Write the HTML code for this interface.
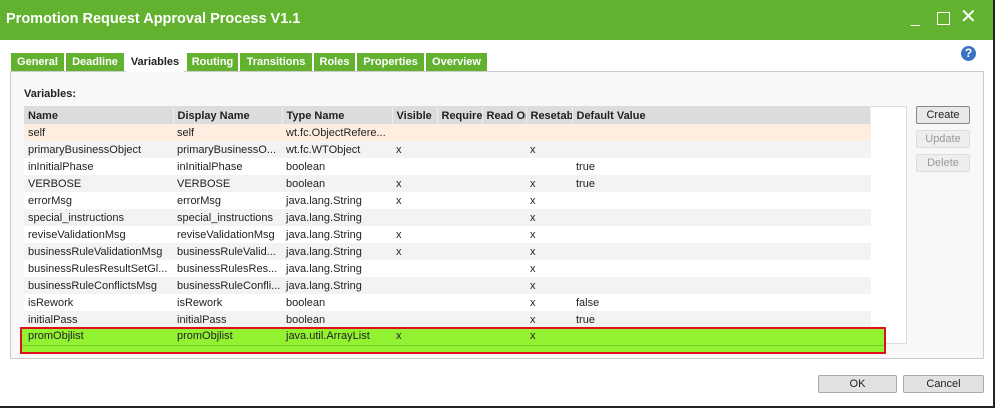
<!DOCTYPE html><html><head><style>
body{margin:0;width:998px;height:410px;background:#fff;font-family:"Liberation Sans",Arial,sans-serif;font-size:11px;color:#222;position:relative;overflow:hidden}
.a{position:absolute}
.title{left:0;top:0;width:993px;height:40px;background:#62b22f;color:#fff;font-weight:bold;font-size:14.5px;line-height:38px}
.tab{position:absolute;top:53px;height:18px;background:#62b22f;color:#fff;font-weight:bold;font-size:11px;line-height:18px;text-align:center}
.tab.sel{background:#fff;color:#222;height:19px}
.panel{left:10px;top:71px;width:972px;height:286px;border:1px solid #ccc;background:#f8f8f8}
table{border-collapse:collapse;position:absolute;left:24px;top:107px;width:847px;table-layout:fixed}
td,th{height:17px;padding:0 0 0 4px;white-space:nowrap;overflow:hidden;text-align:left;font-size:11px}
th{background:#dcdcdc;border-right:1px solid #eee;font-weight:bold}
tr:nth-child(odd) td{background:#f3f3f3}tr:nth-child(even) td{background:#fff}
.btn{position:absolute;border:1px solid #aaa;border-radius:2px;background:#e8e8e8;text-align:center;font-size:11px;line-height:16px}
</style></head><body>
<div class="a title"><span style="margin-left:6px">Promotion Request Approval Process V1.1</span>
<span class="a" style="left:911px;top:0;font-weight:normal;font-size:16px">_</span>
<span class="a" style="left:937px;top:12px;width:11px;height:11px;border:1.5px solid #fff"></span>
<span class="a" style="left:960px;top:-2px;font-weight:normal;font-size:20px">✕</span></div>
<div class="a" style="left:993px;top:0;width:2px;height:408px;background:#222"></div>
<div class="a" style="left:0;top:406px;width:995px;height:2px;background:#222"></div>
<div class="a" style="left:961px;top:46px;width:15px;height:15px;border-radius:50%;background:#3a73c4;color:#fff;font-weight:bold;font-size:12px;text-align:center;line-height:15px">?</div>
<div class="a panel"></div>
<div class="tab" style="left:11px;width:53px">General</div>
<div class="tab" style="left:66px;width:58px">Deadline</div>
<div class="tab sel" style="left:126px;width:58px">Variables</div>
<div class="tab" style="left:187px;width:51px">Routing</div>
<div class="tab" style="left:240px;width:72px">Transitions</div>
<div class="tab" style="left:314px;width:41px">Roles</div>
<div class="tab" style="left:357px;width:67px">Properties</div>
<div class="tab" style="left:426px;width:61px">Overview</div>
<div class="a" style="left:24px;top:88px;font-weight:bold">Variables:</div>
<div class="a" style="left:24px;top:106px;width:881px;height:236px;background:#fff;border:1px solid #ddd"></div>
<table>
<colgroup><col style="width:149px"><col style="width:109px"><col style="width:110px"><col style="width:45px"><col style="width:45px"><col style="width:44px"><col style="width:46px"><col></colgroup>
<tr><th>Name</th><th>Display Name</th><th>Type Name</th><th>Visible</th><th>Require</th><th>Read Or</th><th>Resetab</th><th>Default Value</th></tr>
<tr><td style="background:#fdeee0">self</td><td style="background:#fdeee0">self</td><td style="background:#fdeee0">wt.fc.ObjectRefere...</td><td style="background:#fdeee0"></td><td style="background:#fdeee0"></td><td style="background:#fdeee0"></td><td style="background:#fdeee0"></td><td style="background:#fdeee0"></td></tr>
<tr><td>primaryBusinessObject</td><td>primaryBusinessO...</td><td>wt.fc.WTObject</td><td>x</td><td></td><td></td><td>x</td><td></td></tr>
<tr><td>inInitialPhase</td><td>inInitialPhase</td><td>boolean</td><td></td><td></td><td></td><td></td><td>true</td></tr>
<tr><td>VERBOSE</td><td>VERBOSE</td><td>boolean</td><td>x</td><td></td><td></td><td>x</td><td>true</td></tr>
<tr><td>errorMsg</td><td>errorMsg</td><td>java.lang.String</td><td>x</td><td></td><td></td><td>x</td><td></td></tr>
<tr><td>special_instructions</td><td>special_instructions</td><td>java.lang.String</td><td></td><td></td><td></td><td>x</td><td></td></tr>
<tr><td>reviseValidationMsg</td><td>reviseValidationMsg</td><td>java.lang.String</td><td>x</td><td></td><td></td><td>x</td><td></td></tr>
<tr><td>businessRuleValidationMsg</td><td>businessRuleValid...</td><td>java.lang.String</td><td>x</td><td></td><td></td><td>x</td><td></td></tr>
<tr><td>businessRulesResultSetGl...</td><td>businessRulesRes...</td><td>java.lang.String</td><td></td><td></td><td></td><td>x</td><td></td></tr>
<tr><td>businessRuleConflictsMsg</td><td>businessRuleConfli...</td><td>java.lang.String</td><td></td><td></td><td></td><td>x</td><td></td></tr>
<tr><td>isRework</td><td>isRework</td><td>boolean</td><td></td><td></td><td></td><td>x</td><td>false</td></tr>
<tr><td>initialPass</td><td>initialPass</td><td>boolean</td><td></td><td></td><td></td><td>x</td><td>true</td></tr>
</table>
<div class="a" style="left:20px;top:327px;width:862px;height:23px;background:#92f232;border:2px solid #e0101a"></div>
<div class="a" style="left:22px;top:345px;width:862px;height:1px;background:#7cc82a"></div>
<div class="a" style="left:28px;top:330px">promObjlist</div>
<div class="a" style="left:177px;top:330px">promObjlist</div>
<div class="a" style="left:286px;top:330px">java.util.ArrayList</div>
<div class="a" style="left:396px;top:330px">x</div>
<div class="a" style="left:530px;top:330px">x</div>
<div class="btn" style="left:916px;top:106px;width:52px;border-color:#888">Create</div>
<div class="btn" style="left:916px;top:130px;width:52px;color:#999;border-color:#ddd;background:#eee">Update</div>
<div class="btn" style="left:916px;top:154px;width:52px;color:#999;border-color:#ddd;background:#eee">Delete</div>
<div class="btn" style="left:818px;top:375px;width:77px;height:16px;background:#e2e2e2">OK</div>
<div class="btn" style="left:903px;top:375px;width:79px;height:16px;background:#e2e2e2">Cancel</div>
</body></html>
